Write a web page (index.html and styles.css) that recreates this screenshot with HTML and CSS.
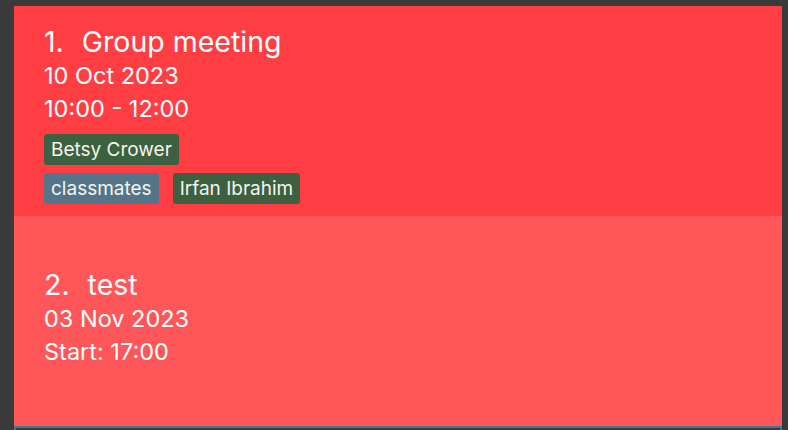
FILE: index.html
```html
<!DOCTYPE html>
<html>
<head>
<meta charset="utf-8">
<link rel="stylesheet" href="styles.css">
</head>
<body>
<div class="panel">
  <div class="card card-a">
    <div class="title"><span class="idx">1.</span><span class="name">Group meeting</span></div>
    <div class="line">10 Oct 2023</div>
    <div class="line">10:00 - 12:00</div>
    <div class="tags">
      <span class="tag person">Betsy Crower</span>
    </div>
    <div class="tags">
      <span class="tag group">classmates</span>
      <span class="tag person">Irfan Ibrahim</span>
    </div>
  </div>
  <div class="card card-b">
    <div class="title"><span class="idx">2.</span><span class="name">test</span></div>
    <div class="line">03 Nov 2023</div>
    <div class="line">Start: 17:00</div>
  </div>
  <div class="next"></div>
</div>
</body>
</html>
```
FILE: styles.css
```css
html, body {
  margin: 0;
  padding: 0;
  background: #3a3a3a;
  height: 100%;
  overflow: hidden;
}
body {
  font-family: "Inter", "Open Sans", sans-serif;
  color: #fff;
}
.panel {
  margin: 6px 6px 0 14px;
  display: flex;
  flex-direction: column;
}
.card {
  height: 210px;
  box-sizing: border-box;
  padding-left: 30px;
  display: flex;
  flex-direction: column;
  justify-content: center;
}
.card-a {
  background: #ff3e44;
  padding-top: 5px;
}
.card-b {
  background: #ff5759;
  padding-bottom: 8px;
}
.title {
  font-size: 28.5px;
  line-height: 35px;
  display: flex;
}
.idx { margin-right: 18px; }
.line {
  font-size: 23.5px;
  line-height: 33px;
}
.tags {
  display: flex;
  gap: 14px;
  margin-top: 9px;
}
.tags + .tags { margin-top: 8px; }
.tag {
  font-size: 19px;
  line-height: 31px;
  padding: 0 7px;
  border-radius: 3px;
  color: #f4f4ee;
}
.person { background: #3d6140; }
.group { background: #547489; }
.next {
  height: 4px;
  border-top: 2px solid #3a7d92;
  border-left: 2px solid #3a7d92;
  border-right: 2px solid #3a7d92;
}
```
